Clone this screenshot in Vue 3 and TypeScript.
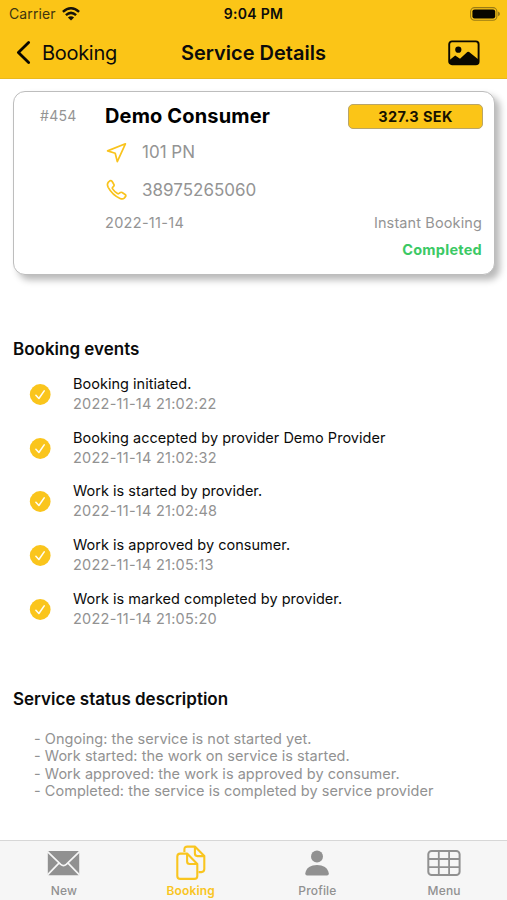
<script setup lang="ts">
interface BookingEvent {
  text: string
  time: string
}

const events: BookingEvent[] = [
  { text: 'Booking initiated.', time: '2022-11-14 21:02:22' },
  { text: 'Booking accepted by provider Demo Provider', time: '2022-11-14 21:02:32' },
  { text: 'Work is started by provider.', time: '2022-11-14 21:02:48' },
  { text: 'Work is approved by consumer.', time: '2022-11-14 21:05:13' },
  { text: 'Work is marked completed by provider.', time: '2022-11-14 21:05:20' },
]

const statuses: string[] = [
  '- Ongoing: the service is not started yet.',
  '- Work started: the work on service is started.',
  '- Work approved: the work is approved by consumer.',
  '- Completed: the service is completed by service provider',
]
</script>

<template>
  <div class="screen">
    <header class="header">
      <div class="status">
        <div class="carrier">
          <span>Carrier</span>
          <svg class="wifi" width="18" height="14" viewBox="0 0 18 14" fill="none" stroke="#17130a" stroke-width="2.5">
            <path d="M0.9 4.9Q9 -2.3 17.1 4.9" />
            <path d="M3.9 8.1Q9 3.7 14.1 8.1" />
            <path d="M9 13.6L5.9 10.4Q9 7.9 12.1 10.4Z" fill="#17130a" stroke="none" />
          </svg>
        </div>
        <span class="clock">9:04 PM</span>
        <svg class="battery" width="30" height="14" viewBox="0 0 30 14">
          <rect x="0.6" y="0.6" width="26.3" height="12.6" rx="4" fill="none" stroke="#9a7b15" stroke-width="1.1" />
          <rect x="2.4" y="2.4" width="22.8" height="9" rx="2.2" fill="#080600" />
          <path d="M28 4.6Q30 5.4 30 7T28 9.3Z" fill="#9a7b15" />
        </svg>
      </div>
      <nav class="nav">
        <div class="back">
          <svg width="15" height="24" viewBox="0 0 15 24" fill="none" stroke="#0a0800" stroke-width="2.8" stroke-linecap="round" stroke-linejoin="round">
            <path d="M12.6 1.6L2.4 11.6L12.6 21.6" />
          </svg>
          <span>Booking</span>
        </div>
        <h1 class="title">Service Details</h1>
        <svg class="photo" width="32" height="26" viewBox="0 0 32 26">
          <rect x="1.2" y="1.4" width="29.4" height="22.8" rx="2.8" fill="none" stroke="#0a0800" stroke-width="1.9" />
          <circle cx="10.3" cy="9.7" r="3.1" fill="#0a0800" />
          <path d="M1.6 20.1L7.2 15.5L12 18.8L19.3 12.1Q20.2 11.4 21.1 12.1L30.2 19.3V22.5Q30.2 24.2 28.4 24.2H3.4Q1.6 24.2 1.6 22.5Z" fill="#0a0800" />
        </svg>
      </nav>
    </header>

    <main class="content">
      <section class="card">
        <span class="number">#454</span>
        <div class="details">
          <div class="top">
            <h2 class="name">Demo Consumer</h2>
            <span class="price">327.3 SEK</span>
          </div>
          <div class="contact address">
            <svg width="22" height="22" viewBox="0 0 22 22" fill="none" stroke="#f9c31d" stroke-width="1.7" stroke-linejoin="round">
              <path d="M20.4 2.8L2.6 9.9L10.2 12.2L12.3 20.6Z" />
            </svg>
            <span>101 PN</span>
          </div>
          <div class="contact phone">
            <svg width="22" height="22" viewBox="0 0 22 22" fill="none" stroke="#f9c31d" stroke-width="1.7" stroke-linejoin="round">
              <path d="M3.4 3.1L4.9 1.8Q6.1 1.1 7 2.3L8.8 5.3Q9.5 6.4 8.6 7.3L7.8 8.2Q7 9 7.6 9.9Q9.5 12.8 12.5 14.6Q13.5 15.1 14.2 14.3L15 13.7Q15.9 12.9 17.1 13.5L20.1 15.5Q21.3 16.4 20.5 17.6L19.2 19.1Q17.7 20.6 15.1 19.4Q7.4 16 3.2 8.3Q1.6 5.2 3.4 3.1Z" />
            </svg>
            <span>38975265060</span>
          </div>
          <div class="meta">
            <span class="date">2022-11-14</span>
            <span class="kind">Instant Booking</span>
          </div>
          <span class="completed">Completed</span>
        </div>
      </section>

      <section class="events">
        <h3 class="heading events-heading">Booking events</h3>
        <ul class="event-list">
          <li v-for="event in events" :key="event.time" class="event">
            <svg class="check" width="22" height="22" viewBox="0 0 22 22">
              <circle cx="11.2" cy="11.5" r="10.4" fill="#fac51c" />
              <path d="M6.9 12.3L9.9 15.5L15.2 7.9" fill="none" stroke="#fffdf2" stroke-width="1.6" stroke-linecap="round" stroke-linejoin="round" />
            </svg>
            <div class="event-copy">
              <span class="event-text">{{ event.text }}</span>
              <time class="event-time">{{ event.time }}</time>
            </div>
          </li>
        </ul>
      </section>

      <section class="description">
        <h3 class="heading status-heading">Service status description</h3>
        <p v-for="status in statuses" :key="status" class="status-line">{{ status }}</p>
      </section>
    </main>

    <footer class="tabs">
      <div class="tab">
        <svg width="36" height="38" viewBox="0 0 36 38">
          <rect x="2.8" y="7" width="31.4" height="24.3" rx="1" fill="#919191" />
          <path d="M2.5 7.6L15.7 20.4Q18.5 22.8 21.3 20.4L34.5 7.6M2.8 30.7L13.7 19.3M34.2 30.7L23.3 19.3" fill="none" stroke="#f6f6f6" stroke-width="1.7" />
        </svg>
        <span>New</span>
      </div>
      <div class="tab active">
        <svg width="36" height="38" viewBox="0 0 36 38" fill="none" stroke="#f9c51f" stroke-width="2.1" stroke-linejoin="round">
          <path d="M12.4 8V5.6Q12.4 2.6 15.4 2.6H22.9L32.3 12.1V25.1Q32.3 28.1 29.3 28.1H26.5M22.9 2.6V9.6Q22.9 12.1 25.4 12.1H32.3" />
          <path d="M8.3 9.6H15.1L25.3 20V31.9Q25.3 34.9 22.3 34.9H8.3Q5.3 34.9 5.3 31.9V12.6Q5.3 9.6 8.3 9.6ZM15.1 9.6V17.5Q15.1 20 17.6 20H25.3" />
        </svg>
        <span>Booking</span>
      </div>
      <div class="tab">
        <svg width="36" height="38" viewBox="0 0 36 38" fill="#919191">
          <circle cx="18" cy="12.5" r="6" />
          <path d="M6.3 29.5C7 23.6 12 20.9 18 20.9S29 23.6 29.8 29.5Q29.9 31.6 28 31.6H8.1Q6.2 31.6 6.3 29.5Z" />
        </svg>
        <span>Profile</span>
      </div>
      <div class="tab">
        <svg width="36" height="38" viewBox="0 0 36 38" fill="none" stroke="#919191" stroke-width="2">
          <rect x="2.3" y="6.9" width="31.3" height="24.2" rx="3.4" />
          <path d="M12.8 7V31M23.1 7V31M2.3 15H33.6M2.3 23.1H33.6" stroke-width="1.8" />
        </svg>
        <span>Menu</span>
      </div>
    </footer>
  </div>
</template>

<style>
body {
  margin: 0;
  background: #fff;
}
</style>

<style scoped>
.screen {
  display: flex;
  flex-direction: column;
  width: 507px;
  height: 900px;
  overflow: hidden;
  background: #fff;
  color: #0b0b0b;
  font-family: Inter, "Liberation Sans", sans-serif;
}

.screen svg {
  display: block;
  flex: none;
}

h1, h2, h3, p, ul {
  margin: 0;
  padding: 0;
}

span, h1, h2, h3, p, time {
  white-space: nowrap;
}

.header {
  flex: none;
  box-sizing: border-box;
  height: 79px;
  background: #fbc517;
  border-bottom: 1px solid #e9b91d;
}

.status {
  display: grid;
  grid-template-columns: 1fr auto 1fr;
  align-items: center;
  height: 27px;
  padding: 0 7px 0 9px;
  font-size: 14px;
  line-height: 27px;
}

.carrier {
  display: flex;
  align-items: center;
  gap: 6px;
  color: #40350f;
  letter-spacing: 0.1px;
}

.clock {
  margin-right: 2px;
  font-weight: 600;
  letter-spacing: 0.3px;
}

.battery {
  justify-self: end;
}

.nav {
  display: grid;
  grid-template-columns: 1fr auto 1fr;
  align-items: center;
  height: 51px;
  padding: 0 16px;
}

.back {
  display: flex;
  align-items: center;
  gap: 11px;
  font-size: 20px;
  letter-spacing: -0.3px;
}

.title {
  font-size: 20px;
  font-weight: 600;
}

.photo {
  justify-self: end;
  margin-right: 11px;
}

.content {
  flex: 1;
}

.card {
  display: grid;
  grid-template-columns: 91px 1fr;
  box-sizing: border-box;
  width: 482px;
  height: 184px;
  margin: 12px 0 0 13px;
  padding-right: 12px;
  border: 1px solid #bdbdbd;
  border-radius: 12px;
  background: #fff;
  box-shadow: 5px 5px 7px rgba(0, 0, 0, 0.28);
  color: #949494;
}

.number {
  padding: 15px 0 0 26px;
  font-size: 14px;
  letter-spacing: 0.3px;
  line-height: 18px;
}

.details {
  display: flex;
  flex-direction: column;
  padding-top: 11px;
}

.top {
  display: flex;
  justify-content: space-between;
  align-items: center;
  height: 26px;
}

.name {
  color: #000;
  font-size: 20px;
  font-weight: 700;
  letter-spacing: 0.15px;
}

.price {
  box-sizing: border-box;
  width: 135px;
  height: 25px;
  margin-right: -1px;
  border: 1px solid #b9a568;
  border-radius: 5px;
  background: #fbc517;
  color: #171200;
  font-size: 14.5px;
  font-weight: 700;
  letter-spacing: 0.4px;
  line-height: 23px;
  text-align: center;
}

.contact {
  display: flex;
  align-items: center;
  gap: 15px;
  height: 38px;
  font-size: 17px;
}

.address {
  margin-top: 4px;
}

.meta {
  display: flex;
  justify-content: space-between;
  height: 27px;
  font-size: 14.5px;
  line-height: 27px;
}

.date {
  letter-spacing: 0.3px;
}

.kind {
  letter-spacing: 0.12px;
}

.completed {
  align-self: flex-end;
  color: #3bc965;
  font-size: 14.5px;
  font-weight: 700;
  letter-spacing: 0.25px;
  line-height: 27px;
}

.heading {
  padding-left: 13px;
  font-size: 17px;
  font-weight: 600;
  line-height: 24px;
}

.events {
  padding-top: 62px;
}

.event-list {
  padding-top: 6px;
  list-style: none;
}

.event {
  display: flex;
  align-items: center;
  gap: 22px;
  height: 53.75px;
  padding-left: 29px;
}

.event-copy {
  display: flex;
  flex-direction: column;
  font-size: 14.5px;
  line-height: 20px;
}

.event-text {
  letter-spacing: 0.02px;
}

.event-time {
  color: #929292;
  letter-spacing: 0.25px;
}

.description {
  padding-top: 51px;
}

.status-heading {
  padding-bottom: 19px;
}

.status-line {
  padding-left: 34px;
  color: #929292;
  font-size: 14.5px;
  letter-spacing: 0.03px;
  line-height: 17.5px;
}

.tabs {
  display: grid;
  flex: none;
  grid-template-columns: repeat(4, 1fr);
  box-sizing: border-box;
  height: 60px;
  border-top: 1px solid #d7d7d7;
  background: #f6f6f6;
  color: #919191;
}

.tab {
  display: flex;
  flex-direction: column;
  align-items: center;
  padding-top: 3px;
  font-size: 12px;
  font-weight: 500;
  letter-spacing: 0.15px;
  line-height: 18px;
}

.tab span {
  padding-left: 1px;
}

.active {
  color: #f9c51f;
  font-weight: 600;
}
</style>
